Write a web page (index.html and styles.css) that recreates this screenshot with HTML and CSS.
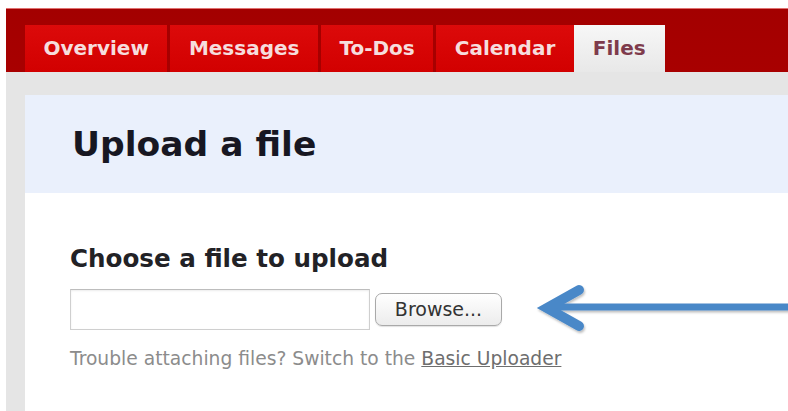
FILE: index.html
```html
<!DOCTYPE html>
<html lang="en">
<head>
<meta charset="utf-8">
<title>Upload a file</title>
<link rel="stylesheet" href="styles.css">
</head>
<body>
<div class="app">
  <nav class="tabbar">
    <a class="tab" href="#">Overview</a>
    <a class="tab" href="#">Messages</a>
    <a class="tab" href="#">To-Dos</a>
    <a class="tab" href="#">Calendar</a>
    <a class="tab tab-active" href="#">Files</a>
  </nav>
  <div class="shell">
    <div class="panel">
      <header class="panel-head">
        <h1 class="title">Upload a file</h1>
      </header>
      <section class="panel-body">
        <h2 class="label">Choose a file to upload</h2>
        <div class="file-row">
          <input class="file-path" type="text" aria-label="File path">
          <button class="browse" type="button">Browse...</button>
          <svg class="pointer" viewBox="0 0 250 44" preserveAspectRatio="none" aria-hidden="true">
            <defs>
              <filter id="soft" x="-10%" y="-30%" width="120%" height="160%">
                <feDropShadow dx="1" dy="2" stdDeviation="1.2" flood-color="#000" flood-opacity="0.25"/>
              </filter>
            </defs>
            <g filter="url(#soft)" stroke="#4a88c8" stroke-linecap="round" fill="none">
              <path d="M6 20 H252" stroke-width="7"/>
              <path d="M37 3 L5 21 L37 39" stroke-width="10" stroke-linejoin="miter"/>
            </g>
          </svg>
        </div>
        <p class="hint">Trouble attaching files? Switch to the <a class="hint-link" href="#">Basic Uploader</a></p>
      </section>
    </div>
  </div>
</div>
</body>
</html>
```
FILE: styles.css
```css
* {
  box-sizing: border-box;
}

html,
body {
  margin: 0;
  height: 100%;
  overflow: hidden;
  background: #ffffff;
  font-family: "DejaVu Sans", "Liberation Sans", sans-serif;
}

.app {
  padding: 8px 0 0 6px;
}

/* Project tab strip */
.tabbar {
  height: 64px;
  display: flex;
  align-items: flex-end;
  gap: 3px;
  padding-left: 19px;
  background: linear-gradient(#a30000, #a80000);
  border-top: 1px solid #e07070;
}

.tab {
  height: 47px;
  line-height: 47px;
  padding: 0 18.5px;
  background: linear-gradient(#dc0a0a, #d20000);
  color: #f6dddd;
  font-weight: bold;
  font-size: 20px;
  text-decoration: none;
  white-space: nowrap;
}

/* the current tab butts directly against its neighbour */
.tab-active {
  margin-left: -3px;
  padding: 0 19px;
  background: linear-gradient(#f7f7f7, #e8e8e8);
  color: #7e3b4c;
}

/* Grey frame around the content panel */
.shell {
  background: #e5e5e5;
  padding: 23px 0 0 19px;
}

.panel-head {
  height: 98px;
  display: flex;
  align-items: center;
  padding-left: 47px;
  background: #eaf0fc;
}

.title {
  margin: 0;
  font-size: 34.5px;
  font-weight: bold;
  color: #171722;
}

.panel-body {
  background: #ffffff;
  padding: 51px 0 0 45px;
  height: 218px;
}

.label {
  margin: 0;
  font-size: 24.6px;
  line-height: 30px;
  font-weight: bold;
  color: #222226;
}

.file-row {
  display: flex;
  align-items: center;
  margin-top: 13px;
}

.file-path {
  flex: 0 0 300px;
  width: 300px;
  height: 41px;
  margin: 0;
  border: 1px solid #cfcfcf;
  border-top-color: #bdbdbd;
  box-shadow: inset 0 1px 2px rgba(0, 0, 0, 0.08);
  background: #fff;
}

.browse {
  flex: 0 0 127px;
  width: 127px;
  height: 33px;
  margin-left: 5px;
  border: 1px solid #a9a9a9;
  border-radius: 7px;
  background: linear-gradient(#ffffff, #ececec);
  box-shadow: 0 1px 1px rgba(0, 0, 0, 0.12);
  font-family: "DejaVu Sans", sans-serif;
  font-size: 19px;
  color: #333;
  padding: 0;
}

.pointer {
  flex: 1;
  height: 44px;
  margin-left: 40px;
  overflow: visible;
}

.hint {
  margin: 17px 0 0;
  font-size: 18.7px;
  line-height: 22px;
  color: #8c8c8c;
}

.hint-link {
  color: #6e6e6e;
  text-decoration: underline;
}
```
